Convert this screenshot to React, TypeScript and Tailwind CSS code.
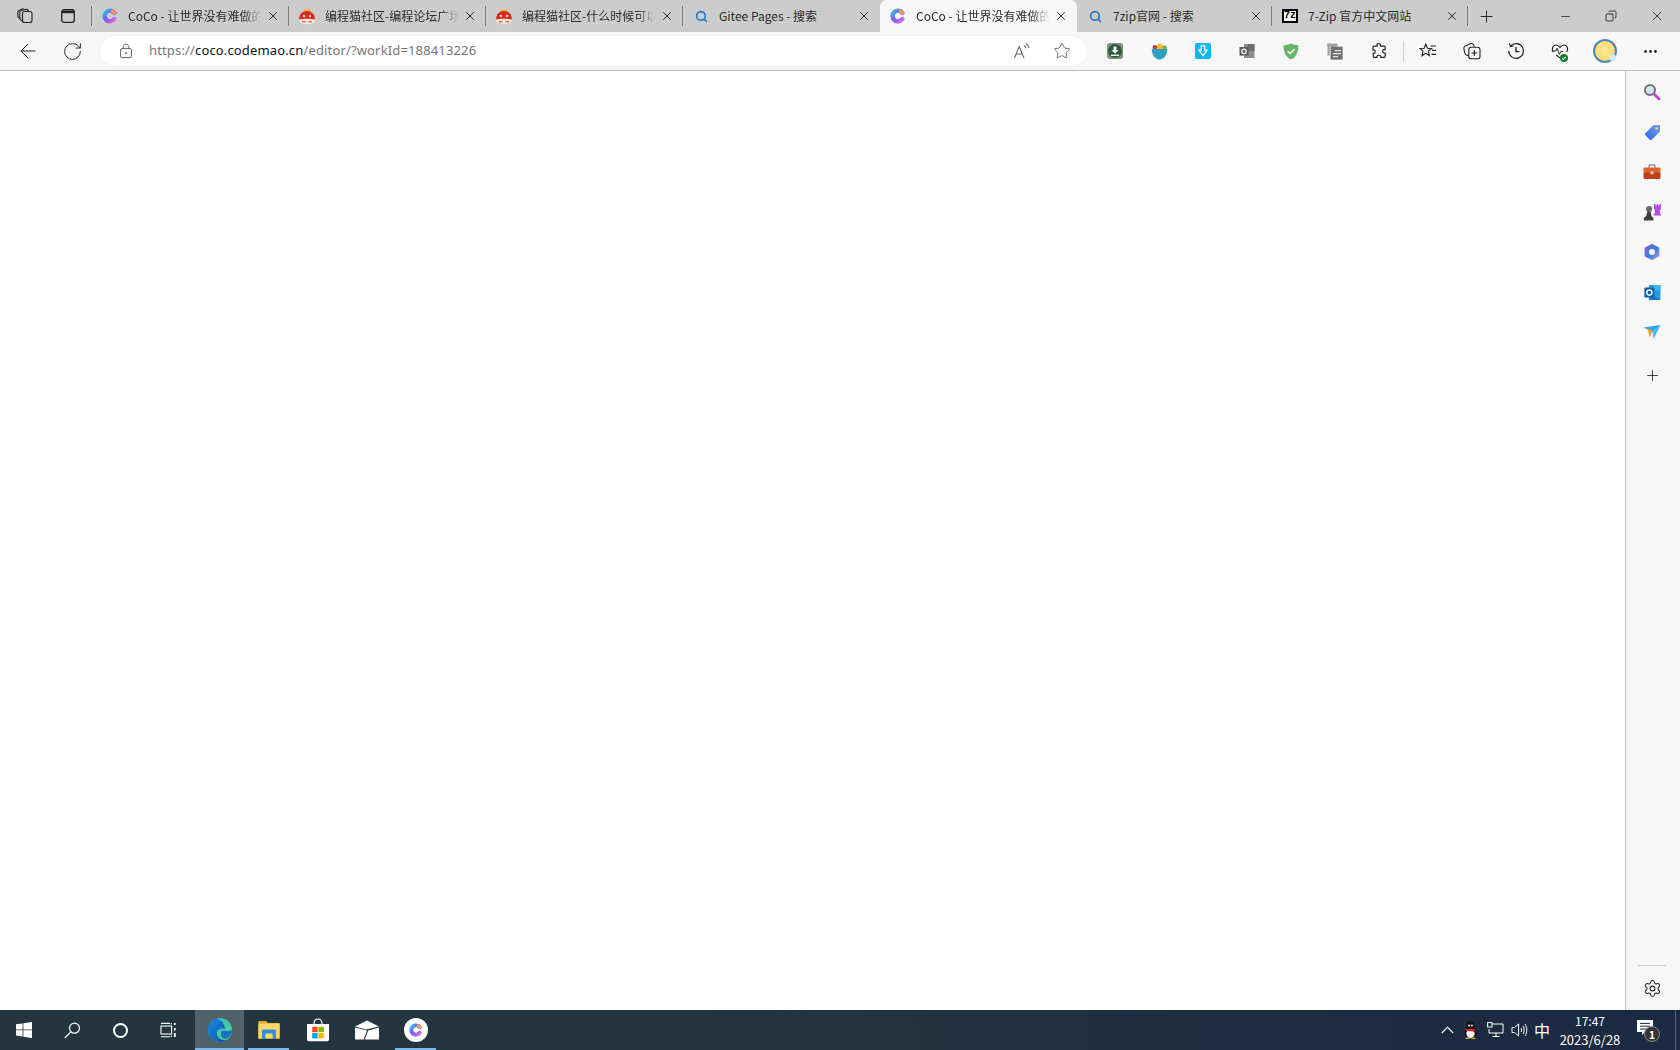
import type { ReactNode } from 'react';
import {
  ArrowLeft,
  Copy,
  Ellipsis,
  Minus,
  Plus,
  RotateCw,
  Search,
  Settings,
  Star,
  X,
} from 'lucide-react';

const uiFont = '"Noto Sans CJK SC", "Noto Sans", sans-serif';

function CocoLogo({ size = 16 }: { size?: number }) {
  return (
    <svg width={size} height={size} viewBox="0 0 16 16">
      <defs>
        <linearGradient id="cocoGrad" x1="0" y1="0" x2="1" y2="1">
          <stop offset="0" stopColor="#34c8ee" />
          <stop offset="0.4" stopColor="#6a63ee" />
          <stop offset="0.8" stopColor="#b65ff0" />
          <stop offset="1" stopColor="#d77be0" />
        </linearGradient>
      </defs>
      <path d="M12.4 4.9 A5.4 5.4 0 1 0 12.4 11.1" fill="none" stroke="url(#cocoGrad)" strokeWidth="4.4" strokeLinecap="round" />
      <path d="M10.4 3.2 A5.4 5.4 0 0 1 12.4 4.9" fill="none" stroke="#f29a55" strokeWidth="3.4" strokeLinecap="round" />
    </svg>
  );
}

function CatLogo() {
  return (
    <svg width="18" height="17" viewBox="0 0 18 17">
      <path d="M5.4 4 L6.6 0.8 L9 2.2 L11.6 0.6 L12.6 4 Z" fill="#f0b23a" />
      <path d="M1.2 12 C0.8 6.6 4 3 9 3 C14 3 17.2 6.6 16.8 12 Z" fill="#d32a22" />
      <path d="M1 11.6 C4 10.6 14 10.6 17 11.6 C17.4 14.6 14 16.2 9 16.2 C4 16.2 0.6 14.6 1 11.6 Z" fill="#f7e6da" />
      <circle cx="6" cy="8" r="1.2" fill="#fbdca0" />
      <circle cx="12" cy="8" r="1.2" fill="#fbdca0" />
      <rect x="4" y="13" width="3.4" height="1.3" fill="#e0584c" />
      <rect x="10.6" y="13" width="3.4" height="1.3" fill="#e0584c" />
    </svg>
  );
}

function SearchFav() {
  return <Search size={13} strokeWidth={3} className="text-[#1b76c8]" />;
}

function ZipLogo() {
  return (
    <div
      className="flex h-[14px] w-[16px] items-center justify-center border-2 border-black bg-white text-[10px] leading-none font-bold text-black"
      style={{ fontFamily: '"Liberation Mono", monospace' }}
    >
      7z
    </div>
  );
}

function Tab({
  icon,
  title,
  active,
  fade,
  separator = true,
  widthClass = 'w-[197px]',
}: {
  icon: ReactNode;
  title: string;
  active?: boolean;
  fade?: boolean;
  separator?: boolean;
  widthClass?: string;
}) {
  return (
    <div
      className={`relative flex h-full shrink-0 items-center pr-[5px] pl-[9px] ${widthClass} ${
        active ? 'rounded-t-[7px] bg-[#f7f7f7]' : ''
      }`}
    >
      <div className="flex w-[18px] shrink-0 items-center justify-center">{icon}</div>
      <div
        className={`ml-[9px] min-w-0 flex-1 overflow-hidden text-[12px] leading-[32px] whitespace-nowrap text-[#2b2b2b] ${
          fade ? '[mask-image:linear-gradient(to_right,black_85%,transparent_100%)]' : ''
        }`}
      >
        {title}
      </div>
      <div className="flex w-[22px] shrink-0 items-center justify-center">
        <X size={14} strokeWidth={1.6} className="text-[#222]" />
      </div>
      {separator && <div className="absolute top-[6px] right-0 h-[20px] w-px bg-[#7d7d7d]" />}
    </div>
  );
}

function WorkspacesIcon() {
  return (
    <svg width="18" height="18" viewBox="0 0 18 18" fill="none" stroke="#222" strokeWidth="1.1">
      <rect x="6.5" y="4.5" width="9.5" height="11" rx="2" />
      <path d="M6.5 14 L4.8 13 C4 12.5 3.8 12 3.8 11 L3.8 5.5 C3.8 4.2 4.7 3.4 6 3.2 L10.5 2.4 C11.6 2.2 12.3 2.8 12.6 4.4" />
      <path d="M3.8 11.5 L2.6 10.6 C2 10 1.8 9.6 1.8 8.8 L1.8 5.4 C1.8 4.3 2.4 3.6 3.4 3.2 L7.5 1.6" />
    </svg>
  );
}

function TabActionsIcon() {
  return (
    <svg width="16" height="16" viewBox="0 0 16 16" fill="none">
      <rect x="1.7" y="1.7" width="12.6" height="12.6" rx="2.4" stroke="#222" strokeWidth="1.3" />
      <path d="M2 2.5 H14 V5.2 H2 Z" fill="#222" />
    </svg>
  );
}

function LockIcon() {
  return (
    <svg width="14" height="16" viewBox="0 0 14 16" fill="none" stroke="#666" strokeWidth="1">
      <rect x="1.6" y="5.6" width="10.8" height="9" rx="1.4" />
      <path d="M4.2 5.6 V3.6 C4.2 2.1 5.4 1 7 1 C8.6 1 9.8 2.1 9.8 3.6 V5.6" />
      <circle cx="7" cy="10" r="1" fill="#666" stroke="none" />
    </svg>
  );
}

function ReadAloudIcon() {
  return (
    <svg width="18" height="18" viewBox="0 0 18 18" fill="none" stroke="#666" strokeWidth="1.1">
      <path d="M1.5 16 L6.2 4.5 L11 16 M3.2 12 H9.4" />
      <path d="M10.8 3.4 C12 4 12.8 5 13.2 6.4" />
      <path d="M12.8 1.4 C14.6 2.4 15.8 4 16.2 6" />
    </svg>
  );
}

function DownloadExt() {
  return (
    <div className="flex h-[16px] w-[16px] items-center justify-center rounded-[3px] bg-[#7e9477]">
      <div className="flex h-[14px] w-[14px] items-center justify-center rounded-full bg-[#2f5a3e]">
        <svg width="10" height="11" viewBox="0 0 10 11" fill="#fff">
          <path d="M3.6 0.5 H6.4 V4 H8.6 L5 7.4 L1.4 4 H3.6 Z" />
          <rect x="1" y="8.6" width="8" height="1.3" />
        </svg>
      </div>
    </div>
  );
}

function BowlExt() {
  return (
    <svg width="17" height="17" viewBox="0 0 17 17">
      <circle cx="9" cy="3.6" r="3" fill="#f1bd30" />
      <circle cx="4" cy="4.4" r="2.4" fill="#c0433f" />
      <circle cx="13.6" cy="4.8" r="2.2" fill="#79a945" />
      <path d="M0.8 6 H16.2 C16.2 12 13 16.4 8.5 16.4 C4 16.4 0.8 12 0.8 6 Z" fill="#2f9fc2" />
    </svg>
  );
}

function ArrowExt() {
  return (
    <div className="flex h-[16px] w-[16px] items-center justify-center rounded-[2px] bg-[#0db7f7]">
      <svg width="10" height="12" viewBox="0 0 10 12" fill="none" stroke="#fff" strokeWidth="1.3">
        <path d="M3.3 0.8 H6.7 V5.2 H9 L5 10.6 L1 5.2 H3.3 Z" />
      </svg>
    </div>
  );
}

function OutlookGrey() {
  return (
    <svg width="16" height="16" viewBox="0 0 16 16">
      <rect x="5" y="1" width="10.5" height="14" fill="#8b8b8b" />
      <rect x="9" y="1" width="6.5" height="7" fill="#6e6e6e" />
      <rect x="0.5" y="4" width="9" height="8.6" fill="#5b5b5b" />
      <circle cx="5" cy="8.3" r="2.2" fill="none" stroke="#eee" strokeWidth="1.3" />
    </svg>
  );
}

function ShieldExt() {
  return (
    <svg width="16" height="17" viewBox="0 0 16 17">
      <path d="M8 0.6 C10.4 1.6 13 2.3 15.4 2.4 C15.4 9 13.4 13.8 8 16.6 C2.6 13.8 0.6 9 0.6 2.4 C3 2.3 5.6 1.6 8 0.6 Z" fill="#68b36b" />
      <path d="M4.6 8 L7.2 10.6 L11.8 6" fill="none" stroke="#e9f5ea" strokeWidth="1.6" />
    </svg>
  );
}

function GreyDocsExt() {
  return (
    <svg width="16" height="17" viewBox="0 0 16 17">
      <rect x="0.5" y="0.6" width="10" height="3" fill="#a0a0a0" />
      <rect x="0.5" y="0.6" width="2.2" height="12" fill="#a0a0a0" />
      <rect x="3.6" y="3.6" width="12" height="13" fill="#6f6f6f" />
      <rect x="8" y="7" width="6" height="1.2" fill="#e8e8e8" />
      <rect x="6" y="10" width="8" height="1.2" fill="#e8e8e8" />
      <rect x="6" y="13" width="5" height="1.2" fill="#e8e8e8" />
    </svg>
  );
}

function PuzzleIcon() {
  return (
    <svg width="18" height="18" viewBox="0 0 18 18" fill="none" stroke="#222" strokeWidth="1.2">
      <path d="M7 2.6 C7 1.2 10.4 1.2 10.4 2.8 V4.2 H14 C14.8 4.2 15.2 4.6 15.2 5.4 V7.6 H14 C12.2 7.6 12.2 11 14 11 H15.2 V14.2 C15.2 15 14.8 15.4 14 15.4 H10.8 V14.6 C10.8 12.8 7 12.8 7 14.6 V15.4 H4.4 C3.6 15.4 3.2 15 3.2 14.2 V11.4 H3.8 C5.6 11.4 5.6 7.8 3.8 7.8 H3 V5.4 C3 4.6 3.4 4.2 4.2 4.2 H7 Z" />
    </svg>
  );
}

function FavoritesIcon() {
  return (
    <svg width="18" height="18" viewBox="0 0 18 18" fill="none" stroke="#222" strokeWidth="1.1">
      <path d="M6.8 2 L8.4 6.2 L12.6 6.4 L9.4 9.2 L10.4 13.6 L6.8 11.2 L3 13.8 L4 9.2 L1 6.4 L5.2 6.2 Z" />
      <path d="M11.5 4 H17 M13 8.4 H17 M12.4 12.4 H17" />
    </svg>
  );
}

function CollectionsIcon() {
  return (
    <svg width="18" height="18" viewBox="0 0 18 18" fill="none" stroke="#222" strokeWidth="1.1">
      <path d="M5.6 14 L3.4 13 C2.4 12.6 2 11.6 1.6 10.4 L0.9 6.6 C0.7 5.4 1.2 4.4 2.4 4 L7.8 1.6 C9 1.2 10 1.6 10.6 2.8 L11.4 4.4" />
      <rect x="5.8" y="5.2" width="11.2" height="11.6" rx="2.4" />
      <path d="M11.4 8 V14 M8.4 11 H14.4" />
    </svg>
  );
}

function HistoryIcon() {
  return (
    <svg width="18" height="18" viewBox="0 0 18 18" fill="none" stroke="#222" strokeWidth="1.2">
      <path d="M3.6 4 A7.4 7.4 0 1 1 1.7 9" />
      <path d="M2.4 1.4 L3.4 4.6 L6.6 4" />
      <path d="M9 5 V9.6 H12.4" strokeWidth="1.4" />
    </svg>
  );
}

function HealthIcon() {
  return (
    <div className="relative h-[18px] w-[18px]">
      <svg width="18" height="18" viewBox="0 0 18 18" fill="none" stroke="#222" strokeWidth="1.1">
        <path d="M2.4 10.2 C0.2 7.4 1.6 3 5 3 C6.8 3 8 4 9 5.4 C10 4 11.2 3 13 3 C16.4 3 17.8 7.4 15.6 10.2 M5.2 13 L9 16" />
        <path d="M0.8 9 H4.6 L6.2 6.4 L8.4 12.4 L10 9.4 H12" strokeWidth="1" />
      </svg>
      <div className="absolute right-[1px] bottom-[-2px] flex h-[8px] w-[8px] items-center justify-center rounded-full bg-[#137c2f]">
        <div className="h-[2px] w-[4px] -rotate-45 border-b border-l border-white" />
      </div>
    </div>
  );
}

function ProfileAvatar() {
  return (
    <div className="relative h-[24px] w-[24px] rounded-full border-[2px] border-[#4d86b8] bg-[radial-gradient(circle_at_50%_45%,#ffe894_0%,#fbdd78_60%,#e7c567_100%)]">
      <div className="absolute right-[-1px] bottom-[0px] h-[7px] w-[7px] rounded-full bg-[#cfe9f6]" />
    </div>
  );
}

function ToolbarButton({ children }: { children: ReactNode }) {
  return <div className="flex h-[38px] w-[44px] shrink-0 items-center justify-center">{children}</div>;
}

function SearchSide() {
  return (
    <svg width="18" height="18" viewBox="0 0 18 18">
      <circle cx="7" cy="7" r="5" fill="#cfe8f7" stroke="#6f6f75" strokeWidth="2" />
      <path d="M11 11 L16 16" stroke="#c93ed8" strokeWidth="2.8" strokeLinecap="round" />
    </svg>
  );
}

function TagSide() {
  return (
    <svg width="17" height="17" viewBox="0 0 17 17">
      <defs>
        <linearGradient id="tagGrad" x1="0" y1="1" x2="1" y2="0">
          <stop offset="0" stopColor="#2f63ea" />
          <stop offset="1" stopColor="#6f9ff5" />
        </linearGradient>
      </defs>
      <path d="M9.5 1 H15 C15.6 1 16 1.4 16 2 V7.5 L7.6 15.8 C7 16.3 6.4 16.3 5.9 15.8 L1.2 11.1 C0.7 10.6 0.7 10 1.2 9.4 Z" fill="url(#tagGrad)" />
      <circle cx="12.6" cy="4.4" r="1.4" fill="#f7cf54" />
    </svg>
  );
}

function ToolboxSide() {
  return (
    <svg width="18" height="16" viewBox="0 0 18 16">
      <path d="M6 4 V2 C6 1.4 6.4 1 7 1 H11 C11.6 1 12 1.4 12 2 V4" fill="none" stroke="#8d8d8d" strokeWidth="1.3" />
      <rect x="0.5" y="3.6" width="17" height="5.4" rx="1" fill="#e1622f" />
      <rect x="0.5" y="8.4" width="17" height="6.6" rx="1" fill="#bf3f1a" />
      <rect x="7.4" y="7.2" width="3.2" height="3" rx="0.6" fill="#d7c7bd" />
    </svg>
  );
}

function ChessSide() {
  return (
    <svg width="18" height="18" viewBox="0 0 18 18">
      <path d="M11 1 H12.6 V2.6 H13.8 V1 H15.2 V2.6 H16.4 V1 H18 V6 L17 7 V10 L18 11.4 V12.4 H10.6 V11.4 L12 10 V7 L11 6 Z" fill="#b44cf0" />
      <circle cx="6" cy="6" r="3" fill="#6b6b6b" />
      <path d="M4.4 8.6 H7.6 L8.4 13 L10.4 15 V17.4 H0.8 V15 L3.2 13 Z" fill="#3f3f3f" />
    </svg>
  );
}

function M365Side() {
  return (
    <svg width="18" height="18" viewBox="0 0 18 18">
      <defs>
        <linearGradient id="msGrad" x1="0" y1="0" x2="1" y2="1">
          <stop offset="0" stopColor="#8a5be0" />
          <stop offset="0.55" stopColor="#3d7ddf" />
          <stop offset="1" stopColor="#c69be8" />
        </linearGradient>
      </defs>
      <path d="M9 1.6 L15.6 5.2 V12.8 L9 16.4 L2.4 12.8 V5.2 Z" fill="url(#msGrad)" stroke="url(#msGrad)" strokeWidth="1.6" strokeLinejoin="round" />
      <circle cx="9" cy="9" r="3" fill="#f7f7f7" />
    </svg>
  );
}

function OutlookSide() {
  return (
    <svg width="17" height="17" viewBox="0 0 17 17">
      <rect x="5" y="1" width="11.4" height="15" fill="#1d9ee0" />
      <rect x="10" y="1" width="6.4" height="5.4" fill="#42b6ee" />
      <path d="M5 9 L16.4 16 H5 Z" fill="#0f7cc4" />
      <rect x="0.4" y="3.6" width="10" height="10" rx="1" fill="#0f5fb0" />
      <circle cx="5.4" cy="8.6" r="2.6" fill="none" stroke="#fff" strokeWidth="1.4" />
    </svg>
  );
}

function SendSide() {
  return (
    <svg width="18" height="16" viewBox="0 0 18 16">
      <path d="M0.4 3.4 L17.6 1 L9.5 8 Z" fill="#2ba5ef" />
      <path d="M17.6 1 L9.5 8 L10.6 15 Z" fill="#4bb8f3" />
      <path d="M0.4 3.4 L9.5 6.4 L6.6 13.6 L5 6 Z" fill="#f0a028" />
    </svg>
  );
}

function WindowsLogo() {
  return (
    <svg width="16" height="16" viewBox="0 0 16 16" fill="#fff">
      <path d="M0 2.3 L6.6 1.4 V7.4 H0 Z M7.4 1.3 L16 0 V7.4 H7.4 Z M0 8.2 H6.6 V14.4 L0 13.5 Z M7.4 8.2 H16 V16 L7.4 14.7 Z" />
    </svg>
  );
}

function TaskSearch() {
  return (
    <svg width="17" height="17" viewBox="0 0 17 17" fill="none" stroke="#fff" strokeWidth="1.2">
      <circle cx="10.5" cy="6.2" r="5" />
      <path d="M6.8 9.8 L0.8 16" />
    </svg>
  );
}

function TaskView() {
  return (
    <svg width="17" height="16" viewBox="0 0 17 16" fill="none" stroke="#fff" strokeWidth="1.1">
      <rect x="1" y="4" width="10.6" height="8" />
      <path d="M1 1.4 H10 M1 14.8 H10 M11.4 1 V2.4 M11.4 13.6 V15" />
      <path d="M14.8 1 V3 M14.8 6 V8.4 M14.8 11 V15" strokeWidth="1.8" />
    </svg>
  );
}

function EdgeLogo() {
  return (
    <svg width="24" height="24" viewBox="0 0 24 24">
      <defs>
        <linearGradient id="edgeA" x1="0" y1="0" x2="1" y2="1">
          <stop offset="0" stopColor="#2fb7ea" />
          <stop offset="1" stopColor="#4fd870" />
        </linearGradient>
        <linearGradient id="edgeB" x1="0" y1="0" x2="1" y2="1">
          <stop offset="0" stopColor="#1c8be0" />
          <stop offset="1" stopColor="#0f4fa8" />
        </linearGradient>
      </defs>
      <circle cx="12" cy="12" r="12" fill="url(#edgeA)" />
      <path d="M12 0 C5 0 0 5.4 0 12 C0 19 5.4 24 12 24 C15 24 17.6 23 19.6 21.4 C14.6 23 9 21 8.8 15.6 C8.6 11 14 9.6 17 11 C16.4 5 14 2 9 1 Z" fill="url(#edgeB)" />
      <path d="M13 14.6 C13.4 12.8 15.6 12.2 18 12.8 C21 13.6 23.6 12.6 24 11 C24 16 21 20 17.6 20.8 C14.6 21.4 12.4 18 13 14.6 Z" fill="#1c6dc8" />
    </svg>
  );
}

function FolderLogo() {
  return (
    <svg width="22" height="20" viewBox="0 0 22 20">
      <path d="M0.4 1 H8 L10 3 H21.6 V18.6 H0.4 Z" fill="#e5a82f" />
      <rect x="0.4" y="3.4" width="21.2" height="15.2" fill="#fbd968" />
      <path d="M4 19 V11 C4 10 4.6 9.6 5.4 9.6 H16.6 C17.4 9.6 18 10 18 11 V19 H14.6 V13.6 H7.4 V19 Z" fill="#2f8fdc" />
    </svg>
  );
}

function StoreLogo() {
  return (
    <svg width="24" height="24" viewBox="0 0 24 24">
      <path d="M8 6 C8 2.4 9.6 1 12 1 C14.4 1 16 2.4 16 6" fill="none" stroke="#fff" strokeWidth="1.2" />
      <path d="M1 6 H23 V21.6 C23 22.6 22.4 23.2 21.4 23.2 H2.6 C1.6 23.2 1 22.6 1 21.6 Z" fill="#fff" />
      <rect x="6.2" y="8.8" width="5.4" height="5.4" fill="#f25022" />
      <rect x="12.4" y="8.8" width="5.4" height="5.4" fill="#7fba00" />
      <rect x="6.2" y="15" width="5.4" height="5.4" fill="#00a4ef" />
      <rect x="12.4" y="15" width="5.4" height="5.4" fill="#ffb900" />
    </svg>
  );
}

function MailLogo() {
  return (
    <svg width="24" height="20" viewBox="0 0 24 20" fill="#fff">
      <path d="M12 0.4 L24 6.4 L11 9.4 L0 6.4 Z" />
      <path d="M0 7.6 L12 10.6 L8.6 19.4 H0 Z M24 7.4 V19.4 H9.8 L13.2 10.6 Z" />
    </svg>
  );
}

function QQIcon() {
  return (
    <svg width="15" height="18" viewBox="0 0 16 20">
      <ellipse cx="8" cy="6" rx="5" ry="5.6" fill="#111" />
      <ellipse cx="8" cy="13" rx="6.6" ry="6" fill="#111" />
      <ellipse cx="8" cy="14" rx="4.6" ry="4.8" fill="#fff" />
      <circle cx="6.4" cy="5" r="1" fill="#fff" />
      <circle cx="9.6" cy="5" r="1" fill="#fff" />
      <path d="M2 9 H14 L12 11 L13 13 L10 11.4 H4 Z" fill="#df2a23" />
      <path d="M3 18.6 H7 V20 H2 Z M9 18.6 H13 L14 20 H9 Z" fill="#eda11f" />
    </svg>
  );
}

function NetworkIcon() {
  return (
    <svg width="17" height="16" viewBox="0 0 17 16" fill="none" stroke="#fff" strokeWidth="1">
      <path d="M5 2 H16 V11 H2 V7" />
      <path d="M9 11 V14 M5.5 14.5 H12.5" />
      <rect x="0.6" y="0.6" width="4.4" height="4.4" />
    </svg>
  );
}

function VolumeIcon() {
  return (
    <svg width="17" height="16" viewBox="0 0 17 16" fill="none" stroke="#fff" strokeWidth="1">
      <path d="M1 5.5 H3.6 L7.6 2 V14 L3.6 10.5 H1 Z" />
      <path d="M10 6 C10.8 7.2 10.8 8.8 10 10" />
      <path d="M12 4 C13.6 6.4 13.6 9.6 12 12" />
      <path d="M14 2 C16.4 5.6 16.4 10.4 14 14" />
    </svg>
  );
}

function ChatIcon() {
  return (
    <div className="relative h-[20px] w-[20px]">
      <svg width="18" height="17" viewBox="0 0 18 17" fill="#fff">
        <path d="M0 0 H16 V12 H8 L5 15 V12 H0 Z" />
        <path d="M3 3.4 H13 M3 6.2 H13 M3 9 H10" stroke="#1b2a42" strokeWidth="1" />
      </svg>
      <div className="absolute top-[6px] left-[7px] flex h-[16px] w-[16px] items-center justify-center rounded-full border border-[#8c8c8c] bg-[#333] text-[11px] leading-none font-bold text-white">
        1
      </div>
    </div>
  );
}

const sideIcons = [SearchSide, TagSide, ToolboxSide, ChessSide, M365Side, OutlookSide, SendSide];

function TaskCell({ children, active, running }: { children: ReactNode; active?: boolean; running?: boolean }) {
  return (
    <div className={`relative flex h-full w-[49px] shrink-0 items-center justify-center ${active ? 'bg-[#4f6268]' : ''}`}>
      {children}
      {running && (
        <div className={`absolute bottom-0 h-[2px] bg-[#76b9ed] ${active ? 'right-0 left-0' : 'right-[4px] left-[4px]'}`} />
      )}
    </div>
  );
}

export default function App() {
  return (
    <div className="flex h-[1050px] w-[1680px] flex-col overflow-hidden bg-white" style={{ fontFamily: uiFont }}>
      {/* tab strip */}
      <div className="flex h-[32px] shrink-0 items-end bg-[#cccccc]">
        <div className="flex h-[32px] w-[91px] shrink-0 items-center">
          <div className="flex w-[50px] justify-center">
            <WorkspacesIcon />
          </div>
          <div className="flex w-[36px] justify-center">
            <TabActionsIcon />
          </div>
        </div>
        <div className="h-[20px] w-px shrink-0 self-center bg-[#7d7d7d]" />
        <Tab icon={<CocoLogo />} title="CoCo - 让世界没有难做的应用" fade />
        <Tab icon={<CatLogo />} title="编程猫社区-编程论坛广场" fade />
        <Tab icon={<CatLogo />} title="编程猫社区-什么时候可以啊" fade />
        <Tab icon={<SearchFav />} title="Gitee Pages - 搜索" separator={false} />
        <Tab icon={<CocoLogo />} title="CoCo - 让世界没有难做的应用" active fade separator={false} />
        <Tab icon={<SearchFav />} title="7zip官网 - 搜索" widthClass="w-[195px]" />
        <Tab icon={<ZipLogo />} title="7-Zip 官方中文网站" widthClass="w-[196px]" />
        <div className="flex w-[36px] shrink-0 items-center justify-center self-center">
          <Plus size={19} strokeWidth={1.2} className="text-[#222]" />
        </div>
        <div className="flex-1" />
        <div className="flex h-full">
          <div className="flex w-[46px] items-center justify-center">
            <Minus size={13} strokeWidth={1.5} className="text-[#222]" />
          </div>
          <div className="flex w-[46px] items-center justify-center">
            <Copy size={12} strokeWidth={1.7} className="-scale-x-100 text-[#222]" />
          </div>
          <div className="flex w-[46px] items-center justify-center">
            <X size={16} strokeWidth={1.2} className="text-[#222]" />
          </div>
        </div>
      </div>

      {/* toolbar */}
      <div className="flex h-[39px] shrink-0 items-start border-b border-[#bdbdbd] bg-[#f7f7f7]">
        <div className="flex h-[38px] w-[50px] items-center justify-center pl-[6px]">
          <ArrowLeft size={24} strokeWidth={1} className="text-[#222]" />
        </div>
        <div className="flex h-[38px] w-[44px] items-center justify-center">
          <RotateCw size={21} strokeWidth={1.1} className="text-[#222]" />
        </div>
        <div className="mt-[4px] ml-[6px] flex h-[30px] w-[987px] shrink-0 items-center rounded-full bg-white shadow-[0_0_2px_rgba(0,0,0,0.08)]">
          <div className="flex w-[49px] shrink-0 justify-center pl-[3px]">
            <LockIcon />
          </div>
          <div className="text-[13px] tracking-[0.15px] whitespace-nowrap text-[#767676]" style={{ fontFamily: '"Noto Sans", sans-serif' }}>
            https://<span className="text-[#111]">coco.codemao.cn</span>/editor/?workId=188413226
          </div>
          <div className="flex-1" />
          <div className="flex w-[40px] justify-center">
            <ReadAloudIcon />
          </div>
          <div className="mr-[5px] flex w-[40px] justify-center">
            <Star size={18} strokeWidth={1.1} className="text-[#555]" />
          </div>
        </div>
        <div className="ml-[6px] flex">
          <ToolbarButton><DownloadExt /></ToolbarButton>
          <ToolbarButton><BowlExt /></ToolbarButton>
          <ToolbarButton><ArrowExt /></ToolbarButton>
          <ToolbarButton><OutlookGrey /></ToolbarButton>
          <ToolbarButton><ShieldExt /></ToolbarButton>
          <ToolbarButton><GreyDocsExt /></ToolbarButton>
          <ToolbarButton><PuzzleIcon /></ToolbarButton>
        </div>
        <div className="mt-[9px] ml-[2px] h-[20px] w-px shrink-0 bg-[#cfcfcf]" />
        <div className="ml-[2px] flex">
          <ToolbarButton><FavoritesIcon /></ToolbarButton>
          <ToolbarButton><CollectionsIcon /></ToolbarButton>
          <ToolbarButton><HistoryIcon /></ToolbarButton>
          <ToolbarButton><HealthIcon /></ToolbarButton>
          <div className="flex h-[38px] w-[46px] shrink-0 items-center justify-center"><ProfileAvatar /></div>
          <ToolbarButton><Ellipsis size={17} strokeWidth={2} className="text-[#222]" /></ToolbarButton>
        </div>
      </div>

      {/* page + sidebar */}
      <div className="flex min-h-0 flex-1">
        <div className="flex-1 bg-white" />
        <div className="flex w-[55px] shrink-0 flex-col items-center border-l border-[#bdbdbd] bg-[#f7f7f7] pr-[2px]">
          <div className="mt-[1px] flex flex-col items-center">
            {sideIcons.map((Icon, i) => (
              <div key={i} className="flex h-[40px] w-[40px] items-center justify-center">
                <Icon />
              </div>
            ))}
            <div className="flex h-[46px] w-[40px] items-center justify-center">
              <Plus size={17} strokeWidth={1.2} className="text-[#222]" />
            </div>
          </div>
          <div className="flex-1" />
          <div className="h-px w-[28px] bg-[#c8c8c8]" />
          <div className="flex h-[44px] items-center justify-center">
            <Settings size={19} strokeWidth={1.3} className="text-[#222]" />
          </div>
        </div>
      </div>

      {/* taskbar */}
      <div className="flex h-[40px] shrink-0 items-center bg-[linear-gradient(to_right,#24373f_0%,#233640_40%,#1c2b42_85%,#1b2a42_100%)]">
        <div className="flex h-full w-[195px] shrink-0 items-center">
          <div className="flex w-[48px] justify-center"><WindowsLogo /></div>
          <div className="flex w-[48px] justify-center"><TaskSearch /></div>
          <div className="flex w-[48px] justify-center">
            <div className="h-[15px] w-[15px] rounded-full border-[2px] border-white" />
          </div>
          <div className="flex w-[48px] justify-center"><TaskView /></div>
        </div>
        <TaskCell active running><EdgeLogo /></TaskCell>
        <TaskCell running><FolderLogo /></TaskCell>
        <TaskCell><StoreLogo /></TaskCell>
        <TaskCell><MailLogo /></TaskCell>
        <TaskCell running>
          <div className="flex h-[24px] w-[24px] items-center justify-center rounded-full bg-white">
            <CocoLogo size={14} />
          </div>
        </TaskCell>
        <div className="flex-1" />
        <div className="flex h-full items-center">
          <div className="flex w-[24px] justify-center pl-[2px]">
            <svg width="13" height="8" viewBox="0 0 13 8" fill="none" stroke="#fff" strokeWidth="1.1">
              <path d="M0.8 7 L6.5 1.2 L12.2 7" />
            </svg>
          </div>
          <div className="flex w-[24px] justify-center"><QQIcon /></div>
          <div className="flex w-[25px] justify-center pl-[2px]"><NetworkIcon /></div>
          <div className="flex w-[24px] justify-center"><VolumeIcon /></div>
          <div className="flex w-[22px] justify-center text-[16px] leading-none text-white">中</div>
          <div className="flex w-[74px] flex-col items-center leading-[19px] text-white">
            <span className="text-[12px]">17:47</span>
            <span className="text-[13px]">2023/6/28</span>
          </div>
          <div className="flex w-[48px] justify-center pr-[8px]"><ChatIcon /></div>
          <div className="h-full w-[5px] border-l border-[#5a6675]" />
        </div>
      </div>
    </div>
  );
}
